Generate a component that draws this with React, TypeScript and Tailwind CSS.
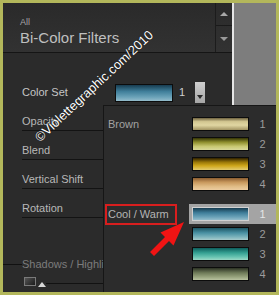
import React from "react";

const brown = [
  "bg-[linear-gradient(to_bottom,#6e6240,#d2c690_30%,#e0d6a2_60%,#a29462)]",
  "bg-[linear-gradient(to_bottom,#343406,#8e8e2c_35%,#c8c872_70%,#d8d89a)]",
  "bg-[linear-gradient(to_bottom,#2e2000,#9a7808_35%,#cfa81c_65%,#e2cc70)]",
  "bg-[linear-gradient(to_bottom,#8a5c30,#c8985c_35%,#e0bc86_70%,#eccca0)]",
];

const cool = [
  "bg-[linear-gradient(to_bottom,#173c50,#3f7e9a_40%,#6aa2b8_75%,#94bccb)]",
  "bg-[linear-gradient(to_bottom,#1e5664,#4890a2_40%,#7cb4bc_75%,#a8cccc)]",
  "bg-[linear-gradient(to_bottom,#0e5e5c,#34a092_40%,#68c4b2_75%,#9cd8c6)]",
  "bg-[linear-gradient(to_bottom,#2c3224,#6e7a58_40%,#98a47e_75%,#b8c2a0)]",
];

const params = ["Opacity", "Blend", "Vertical Shift", "Rotation"];

function Group({
  label,
  swatches,
  marked,
  className = "",
}: {
  label: string;
  swatches: string[];
  marked?: boolean;
  className?: string;
}) {
  return (
    <div className={`flex ${className}`}>
      <div className="w-[84px]">
        <div
          className={`flex h-[21px] w-[72px] items-center border-2 px-[1px] text-[11px] leading-[13px] ${
            marked ? "border-[#d81e1e] text-[#b4b4b4]" : "border-transparent text-[#a2a2a2]"
          }`}
        >
          {label}
        </div>
      </div>
      <div className="flex flex-1 flex-col">
        {swatches.map((s, i) => {
          const sel = marked && i === 0;
          return (
            <div
              key={i}
              className={`flex h-[20px] items-center pl-[3px] ${sel ? "bg-[#a4a4a4]" : ""}`}
            >
              <div
                className={`h-[14px] w-[57px] border ${s} ${
                  sel ? "border-[#d0d0d0]" : "border-[#0c0c0c]"
                }`}
              />
              <span
                className={`flex-1 text-center text-[11px] leading-[13px] ${
                  sel ? "text-[#e6e6e6]" : "text-[#9c9c9c]"
                }`}
              >
                {i + 1}
              </span>
            </div>
          );
        })}
      </div>
    </div>
  );
}

export default function App() {
  return (
    <div className="h-[295px] w-[279px] bg-[#b3b75b] p-[3px] font-['Liberation_Sans',Arial,sans-serif]">
      <div className="relative flex h-[289px] w-[273px] overflow-hidden">
        {/* main panel */}
        <div className="flex w-[229px] flex-col bg-[#2b2b2b]">
          <div className="flex h-[50px] border-b border-[#151515] bg-[linear-gradient(to_bottom,#2a2a2a,#323232)]">
            <div className="flex-1 pl-[17px] pt-[14px]">
              <div className="text-[9px] leading-[10px] text-[#a8a8a8]">All</div>
              <div className="mt-[2px] text-[15px] leading-[17px] text-[#bfbfbf]">
                Bi-Color Filters
              </div>
            </div>
            <div className="flex w-[17px] flex-col border-l border-[#1c1c1c]">
              <div className="flex h-[23px] items-center justify-center border-b border-[#1a1a1a]">
                <div className="border-x-[4px] border-b-[4px] border-x-transparent border-b-[#a8a8a8]" />
              </div>
              <div className="flex flex-1 items-center justify-center">
                <div className="border-x-[4px] border-t-[4px] border-x-transparent border-t-[#9a9a9a]" />
              </div>
            </div>
          </div>

          <div className="flex flex-col">
            <div className="ml-[19px] mt-[30px] flex h-[19px] items-center">
              <span className="w-[93px] text-[11px] leading-[13px] text-[#c6c6c6]">Color Set</span>
              <div className={`h-[18px] w-[58px] border border-[#0c0c0c] ${cool[0]}`} />
              <span className="ml-[6px] w-[8px] text-[11px] leading-[13px] text-[#d0d0d0]">1</span>
              <div className="ml-[8px] flex h-[21px] w-[10px] flex-col items-center justify-end bg-[linear-gradient(to_bottom,#cfcfcf,#a6a6a6)] pb-[4px]">
                <div className="border-x-[3px] border-t-[4px] border-x-transparent border-t-[#2a2a2a]" />
              </div>
            </div>
            {params.map((p) => (
              <div
                key={p}
                className="ml-[19px] flex h-[29px] w-[180px] items-end border-b border-[#131313] pb-[2px]"
              >
                <span className="text-[11px] leading-[13px] text-[#b8b8b8]">{p}</span>
              </div>
            ))}
            <div className="mt-[39px] flex h-[14px] items-center">
              <div className="h-px w-[19px] bg-[#111]" />
              <span className="text-[11px] leading-[13px] text-[#7c7c7c]">Shadows / Highlights</span>
            </div>
            <div className="ml-[21px] mt-[6px] flex h-[10px] items-end">
              <div className="mb-[1px] h-[9px] w-[12px] border border-[#7a7a7a] bg-[linear-gradient(135deg,#555,#1a1a1a)]" />
              <div className="ml-[2px] border-x-[4px] border-b-[5px] border-x-transparent border-b-[#d8d8d8]" />
              <div className="mb-[3px] h-px w-[120px] bg-[#121212]" />
            </div>
          </div>
        </div>
        <div className="w-[2px] bg-[#e6e6e6]" />
        <div className="flex-1 bg-[#7d7d7d]" />

        {/* watermark */}
        <div className="pointer-events-none absolute left-[91px] top-[83px] -translate-x-1/2 -translate-y-1/2 rotate-[-43deg] whitespace-nowrap text-[13px] leading-[15px] text-white [text-shadow:0_0_1px_#000]">
          ©Violettegraphic.com/2010
        </div>

        {/* dropdown */}
        <div className="absolute bottom-0 left-[100px] right-0 top-[102px] border-l border-t border-[#161616] bg-[#2c2c2c] pl-[1px] pt-[8px]">
          <Group label="Brown" swatches={brown} />
          <Group label="Cool / Warm" swatches={cool} marked className="mt-[10px]" />
        </div>

        {/* annotation arrow */}
        <svg
          className="pointer-events-none absolute left-[-3px] top-[-3px]"
          width="279"
          height="295"
          viewBox="0 0 279 295"
        >
          <polygon
            points="150,252 165,237 160.5,232.5 184,222 173.5,245.5 169,241 154,256"
            fill="#f01414"
          />
        </svg>
      </div>
    </div>
  );
}
